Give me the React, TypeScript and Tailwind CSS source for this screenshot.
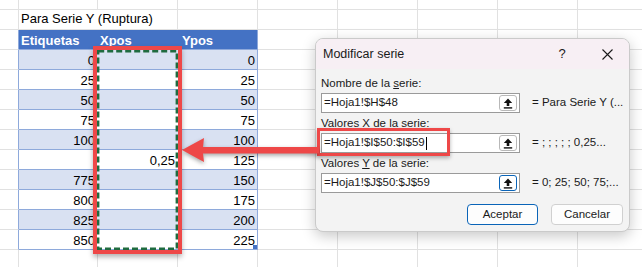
import React from 'react';

const rows = [
  { b: '0', c: '', d: '0' },
  { b: '25', c: '', d: '25' },
  { b: '50', c: '', d: '50' },
  { b: '75', c: '', d: '75' },
  { b: '100', c: '', d: '100' },
  { b: '', c: '0,25', d: '125' },
  { b: '775', c: '', d: '150' },
  { b: '800', c: '', d: '175' },
  { b: '825', c: '', d: '200' },
  { b: '850', c: '', d: '225' },
];

function Tail({ n = 6 }: { n?: number }) {
  return (
    <>
      {Array.from({ length: n }).map((_, i) => (
        <div key={i} className="w-[80px] h-full shrink-0 border-r border-b border-[#e1e1e1]" />
      ))}
    </>
  );
}

function UpIcon() {
  return (
    <svg width="10" height="11" viewBox="0 0 10 11">
      <polygon points="5,0.5 9.2,5 6.3,5 6.3,8 3.7,8 3.7,5 0.8,5" fill="#111" />
      <rect x="0.8" y="9.2" width="8.4" height="1.4" fill="#111" />
    </svg>
  );
}

function Field({ label, value, preview, focus, caret }: { label: React.ReactNode; value: string; preview: string; focus?: boolean; caret?: boolean }) {
  return (
    <div>
      <div className="h-[20px] leading-[21px]">{label}</div>
      <div className="flex items-center h-[20px]">
        <div className="w-[199px] h-[20px] shrink-0 bg-white border border-[#9a9a9a] flex items-center pl-[2px] pr-[2px]">
          <span className="flex-1 flex items-center whitespace-nowrap">
            {value}
            {caret && <span className="inline-block w-[1px] h-[13px] bg-black ml-[1px]" />}
          </span>
          <div className={`w-[18px] h-[16px] rounded-[3px] bg-white flex items-center justify-center ${focus ? 'border-[1.5px] border-[#0a64b8]' : 'border border-[#b8b8b8]'}`}>
            <UpIcon />
          </div>
        </div>
        <span className="ml-[12px] whitespace-nowrap">{preview}</span>
      </div>
    </div>
  );
}

export default function App() {
  return (
    <div className="relative w-[642px] h-[267px] overflow-hidden bg-white text-black font-['Liberation_Sans',Arial,sans-serif]">
      {/* hoja */}
      <div className="text-[13px]">
        <div className="flex h-[10px]">
          <div className="w-[19px] h-full shrink-0 border-r border-b border-[#e1e1e1]" />
          <div className="w-[79px] h-full shrink-0 border-r border-b border-[#e1e1e1]" />
          <Tail n={8} />
        </div>
        <div className="flex h-[20px]">
          <div className="w-[19px] h-full shrink-0 border-r border-b border-[#e1e1e1]" />
          <div className="w-[159px] h-full shrink-0 border-r border-b border-[#e1e1e1] pl-[2px] leading-[18px] whitespace-nowrap">Para Serie Y (Ruptura)</div>
          <Tail n={7} />
        </div>
        <div className="flex h-[20px]">
          <div className="w-[19px] h-full shrink-0 border-r border-b border-r-[#8ea9db] border-b-[#e1e1e1]" />
          <div className="w-[79px] h-full shrink-0 bg-[#4472c4] text-white font-bold pl-[2px] leading-[22px] border-b border-[#8ea9db]">Etiquetas</div>
          <div className="w-[80px] h-full shrink-0 bg-[#4472c4] text-white font-bold pl-[2px] leading-[22px] border-b border-[#8ea9db]">Xpos</div>
          <div className="w-[80px] h-full shrink-0 bg-[#4472c4] text-white font-bold pl-[4px] leading-[22px] border-b border-r border-[#8ea9db]">Ypos</div>
          <Tail n={6} />
        </div>
        {rows.map((r, i) => {
          const bg = i % 2 === 0 ? 'bg-[#d9e1f2]' : 'bg-white';
          return (
            <div key={i} className="flex h-[20px]">
              <div className="w-[19px] h-full shrink-0 border-r border-b border-r-[#8ea9db] border-b-[#e1e1e1]" />
              <div className={`w-[79px] h-full shrink-0 ${bg} border-b border-[#8ea9db] text-right pr-[3px] leading-[22px]`}>{r.b}</div>
              <div className={`w-[80px] h-full shrink-0 ${bg} border-b border-[#8ea9db] text-right pr-[3px] leading-[22px]`}>{r.c}</div>
              <div className={`w-[80px] h-full shrink-0 ${bg} border-b border-r border-[#8ea9db] text-right pr-[2px] leading-[22px]`}>{r.d}</div>
              <Tail n={6} />
            </div>
          );
        })}
        <div className="flex h-[20px]">
          <div className="w-[19px] h-full shrink-0 border-r border-b border-[#e1e1e1]" />
          <div className="w-[79px] h-full shrink-0 border-r border-b border-[#e1e1e1]" />
          <Tail n={8} />
        </div>
      </div>

      {/* controlador de tamaño de la tabla */}
      <div className="absolute left-[253px] top-[245px] w-[4px] h-[4px] bg-[#4472c4]" />

      {/* selección Xpos */}
      <div className="absolute left-[93px] top-[46px] w-[89px] h-[208px] border-[4px] border-[#ee4848] shadow-[0_3px_5px_rgba(0,0,0,0.3)]">
        <svg className="w-full h-full" viewBox="0 0 81 200">
          <rect x="1.2" y="1.2" width="78.6" height="197.6" fill="none" stroke="#1f6b3f" strokeWidth="2.4" strokeDasharray="6 3" />
        </svg>
      </div>

      {/* diálogo */}
      <div className="absolute left-[315px] top-[38px] w-[315px] h-[194px] rounded-[8px] border border-[#cacaca] bg-[#f3f3f3] shadow-[0_4px_14px_rgba(0,0,0,0.22)] overflow-hidden flex flex-col text-[11.5px] text-[#1a1a1a]">
        <div className="h-[30px] shrink-0 bg-[#f7eff4] flex items-center pl-[7px] pr-[12px] gap-[25px]">
          <span className="flex-1 text-[12.5px]">Modificar serie</span>
          <span className="w-[20px] text-center text-[13px]">?</span>
          <span className="w-[20px] flex items-center justify-center">
            <svg width="11" height="11" viewBox="0 0 11 11">
              <path d="M0.5 0.5 L10.5 10.5 M10.5 0.5 L0.5 10.5" stroke="#1a1a1a" strokeWidth="1.1" />
            </svg>
          </span>
        </div>
        <div className="pl-[5px] pt-[4px] flex flex-col">
          <Field label={<>Nombre de la <u>s</u>erie:</>} value="=Hoja1!$H$48" preview="= Para Serie Y (..." />
          <Field label="Valores X de la serie:" value="=Hoja1!$I$50:$I$59" preview="= ; ; ; ; ; 0,25..." caret />
          <Field label={<>Valores <u>Y</u> de la serie:</>} value="=Hoja1!$J$50:$J$59" preview="= 0; 25; 50; 75;..." focus />
          <div className="flex justify-end gap-[13px] pr-[6px] mt-[11px]">
            <button className="w-[71px] h-[21px] rounded-[4px] bg-[#fdfdfd] border-[1.5px] border-[#0a64b8]">Aceptar</button>
            <button className="w-[72px] h-[21px] rounded-[4px] bg-[#fdfdfd] border border-[#d0d0d0]">Cancelar</button>
          </div>
        </div>
      </div>

      {/* resaltado del campo X */}
      <div className="absolute left-[317px] top-[128px] w-[133px] h-[28px] border-[3px] border-[#ee4848] shadow-[0_2px_4px_rgba(0,0,0,0.3)]" />

      {/* flecha */}
      <svg className="absolute left-[180px] top-[134px] drop-shadow-[0_2px_2px_rgba(0,0,0,0.35)]" width="140" height="32" viewBox="0 0 140 32">
        <polygon points="2,16 24,4 23,13 139,13 139,19.5 23,19.5 24,28" fill="#ee4848" />
      </svg>
    </div>
  );
}
